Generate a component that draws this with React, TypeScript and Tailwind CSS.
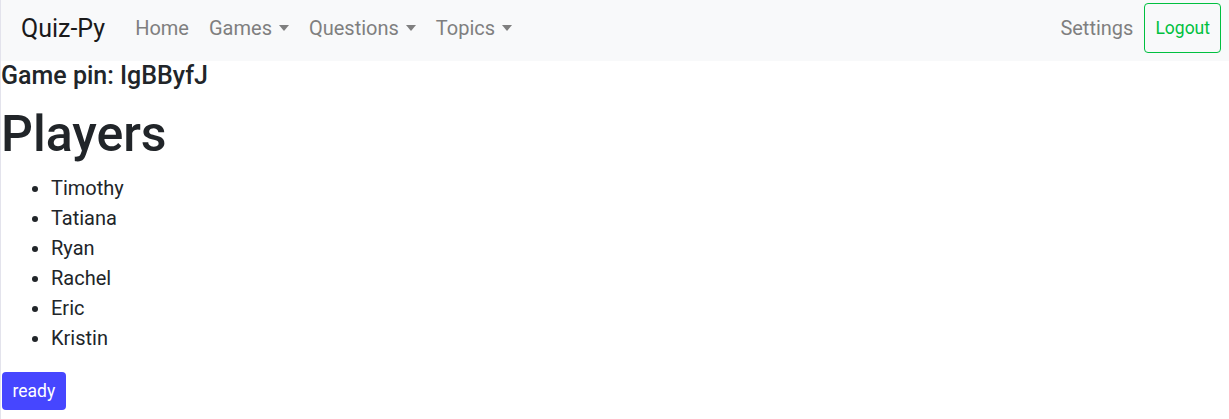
import React from 'react';

const players = ['Timothy', 'Tatiana', 'Ryan', 'Rachel', 'Eric', 'Kristin'];

function Caret() {
  return (
    <span className="ml-[7px] inline-block h-0 w-0 border-x-[5px] border-t-[6px] border-x-transparent border-t-[#7f7f7f] align-[4px]" />
  );
}

function NavLink({ label, dropdown }: { label: string; dropdown?: boolean }) {
  return (
    <a className="px-[10px] text-[20px] leading-[30px] text-[#7f7f7f] cursor-pointer">
      {label}
      {dropdown && <Caret />}
    </a>
  );
}

export default function App() {
  return (
    <div
      className="min-h-[419px] w-[1229px] bg-white border-l border-[#e3e3ec] text-[#212529]"
      style={{ fontFamily: 'Roboto, "Liberation Sans", sans-serif' }}
    >
      {/* Navbar */}
      <nav className="flex h-[61px] items-center bg-[#f8f9fa] pb-[5px] pl-[20px] pr-[8px]">
        <a className="mr-[20px] text-[25px] leading-[37px] text-[#1a1a1a]">Quiz-Py</a>
        <div className="flex items-center">
          <NavLink label="Home" />
          <NavLink label="Games" dropdown />
          <NavLink label="Questions" dropdown />
          <NavLink label="Topics" dropdown />
        </div>
        <div className="ml-auto flex items-center">
          <NavLink label="Settings" />
          <button className="ml-[1px] h-[50px] rounded-[4px] border border-[#00c040] px-[10px] text-[17.5px] leading-[26px] text-[#00c040]">
            Logout
          </button>
        </div>
      </nav>

      {/* Lobby */}
      <div>
        <h5 className="mb-[13px] text-[25px] font-medium leading-[30px]">Game pin: IgBByfJ</h5>
        <h1 className="mb-[9px] text-[50px] font-medium leading-[60px]">Players</h1>
        <ul className="mb-[19px] list-disc pl-[50px] text-[20px] leading-[30px]">
          {players.map((p) => (
            <li key={p}>{p}</li>
          ))}
        </ul>
        <button className="ml-px rounded-[4px] bg-[#4646ff] px-[10.5px] py-[6px] text-[17.5px] leading-[26px] text-white">
          ready
        </button>
      </div>
    </div>
  );
}
